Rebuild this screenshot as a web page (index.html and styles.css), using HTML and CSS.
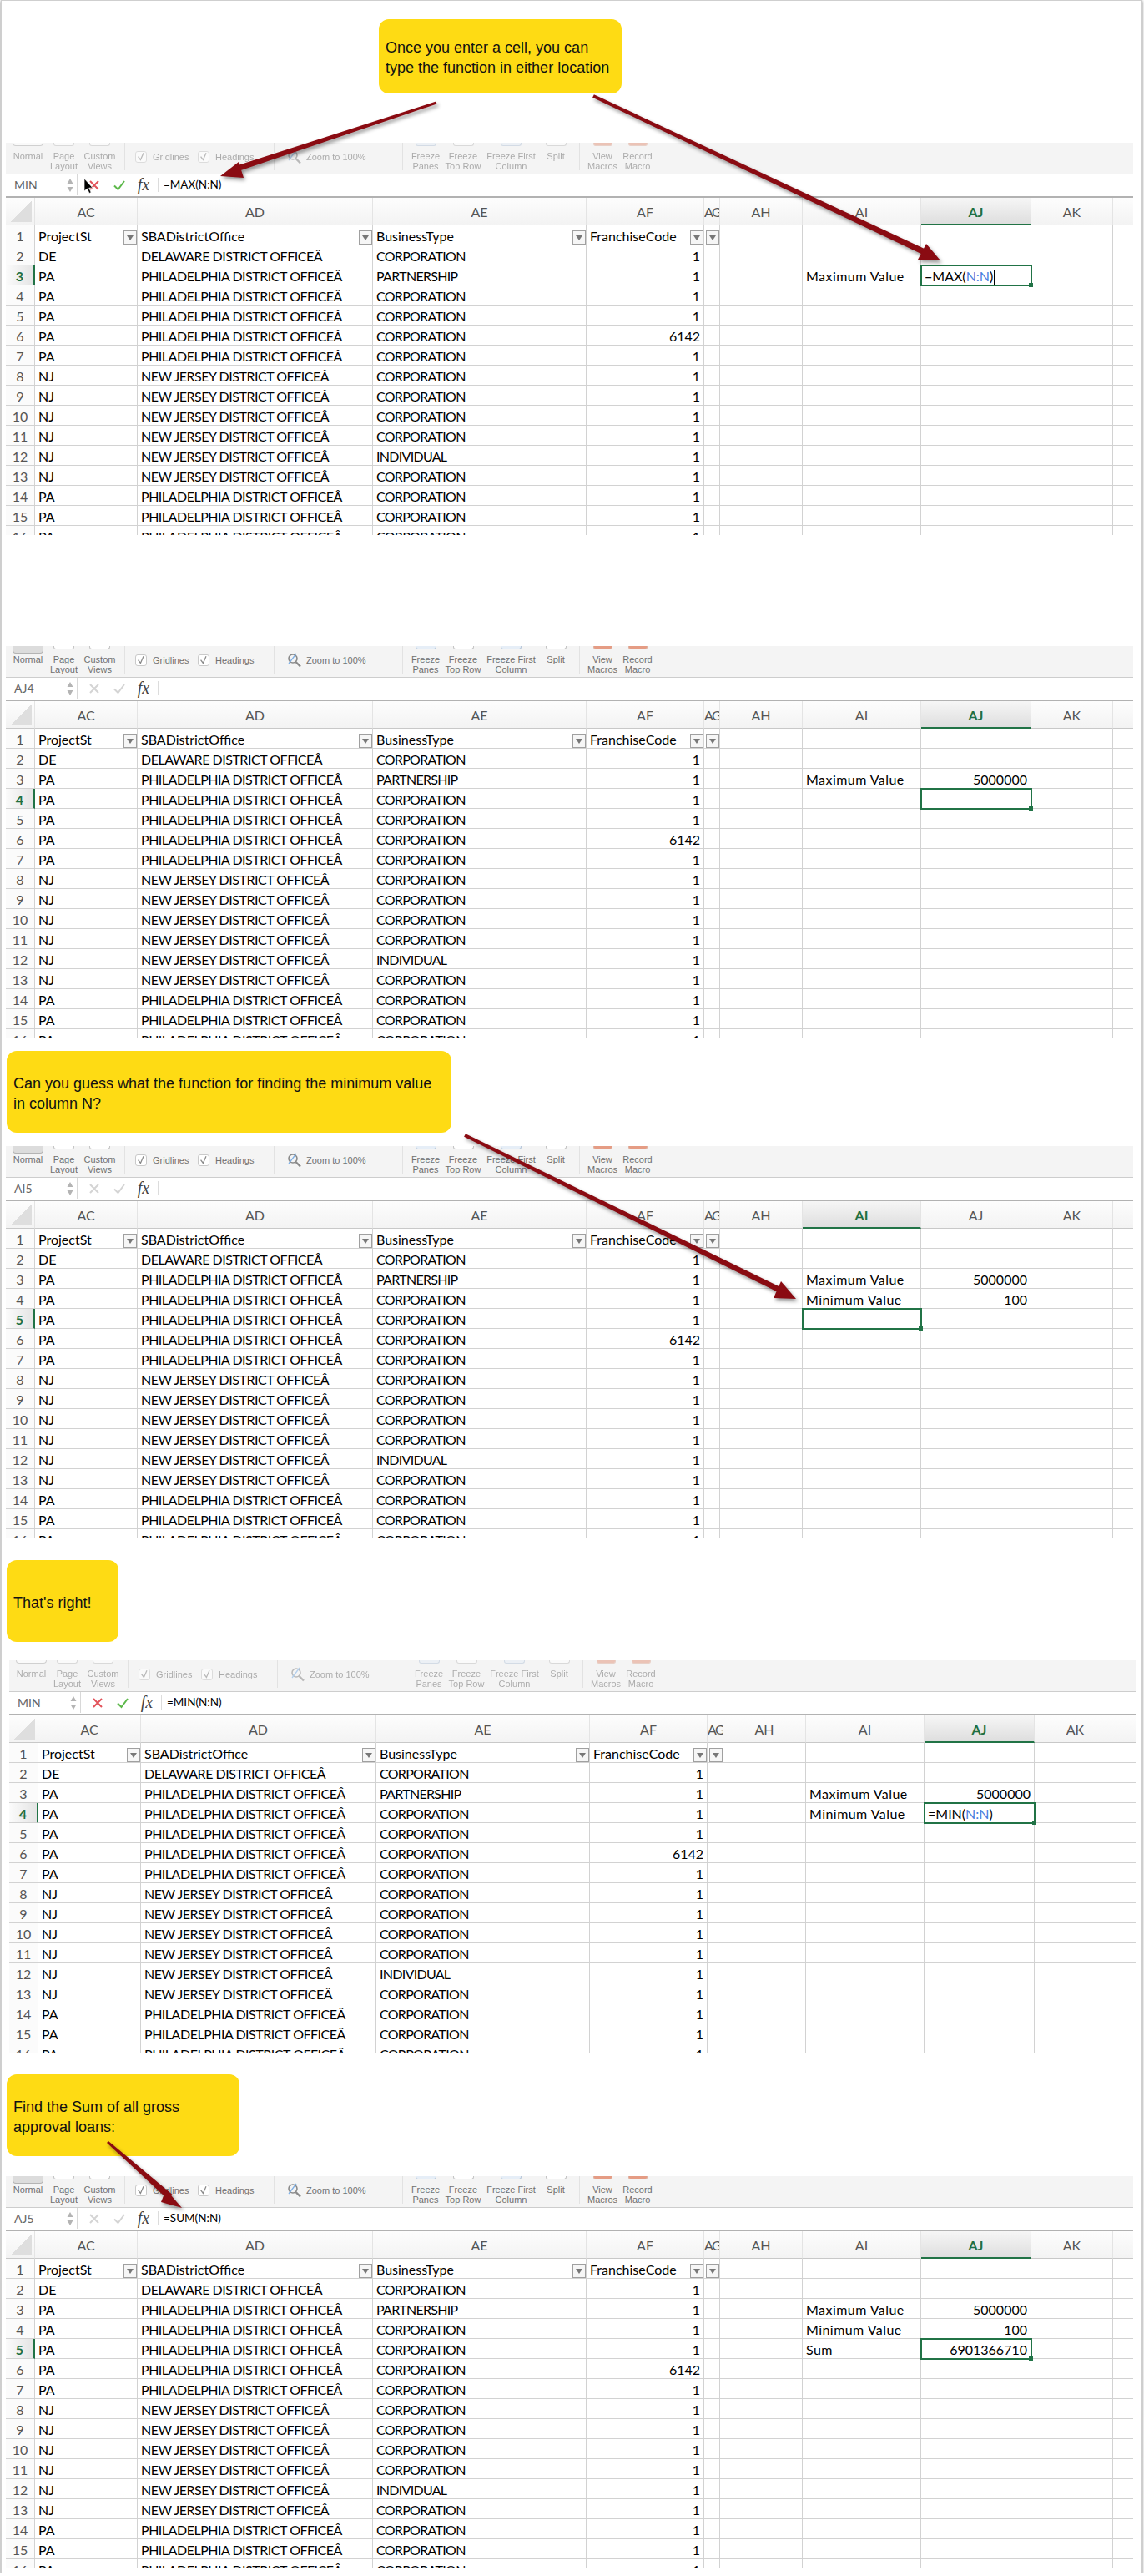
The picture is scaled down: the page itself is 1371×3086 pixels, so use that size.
FILE: index.html
```html
<!DOCTYPE html>
<html lang="en">
<head>
    <meta charset="UTF-8">
    <title>Excel Functions: MAX, MIN and SUM</title>
    <link rel="stylesheet" href="styles.css">
</head>
<body>
<svg class="defs" width="0" height="0">
    <symbol id="i-x" viewBox="0 0 14 14"><path d="M2 2L12 12M12 2L2 12" fill="none" stroke="currentColor" stroke-width="2"/></symbol>
    <symbol id="i-ok" viewBox="0 0 14 14"><path d="M1 7.5L5.5 12L13 2" fill="none" stroke="currentColor" stroke-width="2"/></symbol>
    <symbol id="i-spin" viewBox="0 0 8 18"><path d="M4 1L7.5 7H.5ZM4 17L7.5 11H.5Z" fill="#b4b4b4"/></symbol>
    <symbol id="i-tick" viewBox="0 0 14 14"><path d="M3 6.5L6.3 11L10.5 1.5" fill="none" stroke="#8a8a8a" stroke-width="1.5"/></symbol>
    <symbol id="i-zoom" viewBox="0 0 18 18"><circle cx="7" cy="7" r="5" fill="none" stroke="#8a8a8a" stroke-width="1.6"/><path d="M10.5 11L16 16.5" stroke="#8a8a8a" stroke-width="2.4"/><path d="M2 13L11 1" stroke="#7fb0e6" stroke-width="1.3"/></symbol>
</svg>

<div class="page">

<div class="callout callout-first">Once you enter a cell, you can<br>type the function in either location</div>

<!-- step 1: typing =MAX -->
<section class="panel panel-edit panel-first">
    <div class="ribbon">
        <div class="group g-views">
            <div class="item"><i class="stub stub-wide"></i><span>Normal</span></div>
            <div class="item"><i class="stub"></i><span>Page<br>Layout</span></div>
            <div class="item"><i class="stub"></i><span>Custom<br>Views</span></div>
        </div>
        <div class="group g-show">
            <div class="check"><span class="box"><svg><use href="#i-tick"/></svg></span>Gridlines</div>
            <div class="check"><span class="box"><svg><use href="#i-tick"/></svg></span>Headings</div>
        </div>
        <div class="group g-zoom"><div class="check"><svg class="zoom-icon"><use href="#i-zoom"/></svg>Zoom to 100%</div></div>
        <div class="group g-freeze">
            <div class="item i-44"><i class="stub stub-blue"></i><span>Freeze<br>Panes</span></div>
            <div class="item i-46"><i class="stub"></i><span>Freeze<br>Top Row</span></div>
            <div class="item i-69"><i class="stub stub-blue"></i><span>Freeze First<br>Column</span></div>
            <div class="item i-38"><i class="stub"></i><span>Split</span></div>
        </div>
        <div class="group g-macro">
            <div class="item i-42"><i class="stub stub-red"></i><span>View<br>Macros</span></div>
            <div class="item i-42"><i class="stub stub-red"></i><span>Record<br>Macro</span></div>
        </div>
    </div>
    <div class="fbar">
        <div class="namebox">MIN<svg class="spin"><use href="#i-spin"/></svg></div>
        <svg class="fb-x"><use href="#i-x"/></svg>
        <svg class="fb-ok"><use href="#i-ok"/></svg>
        <span class="fx">fx</span>
        <span class="formula">=MAX(N:N)</span>
    </div>
    <table class="grid">
        <tr><th class="corner"></th><th>AC</th><th>AD</th><th>AE</th><th>AF</th><th>AG</th><th>AH</th><th>AI</th><th class="on">AJ</th><th>AK</th><th></th></tr>
        <tr class="head"><th>1<td><b class="fb"></b>ProjectSt<td><b class="fb"></b>SBADistrictOffice<td><b class="fb"></b>BusinessType<td><b class="fb"></b>FranchiseCode<td><b class="fb"></b><td><td><td><td><td></tr>
        <tr><th>2<td>DE<td>DELAWARE DISTRICT OFFICEÂ<td>CORPORATION<td>1<td><td><td><td><td><td></tr>
        <tr><th class="on">3<td>PA<td>PHILADELPHIA DISTRICT OFFICEÂ<td>PARTNERSHIP<td>1<td><td><td>Maximum Value<td class="sel edit caret">=MAX(<em>N:N</em>)<u></u><td><td></tr>
        <tr><th>4<td>PA<td>PHILADELPHIA DISTRICT OFFICEÂ<td>CORPORATION<td>1<td><td><td><td><td><td></tr>
        <tr><th>5<td>PA<td>PHILADELPHIA DISTRICT OFFICEÂ<td>CORPORATION<td>1<td><td><td><td><td><td></tr>
        <tr><th>6<td>PA<td>PHILADELPHIA DISTRICT OFFICEÂ<td>CORPORATION<td>6142<td><td><td><td><td><td></tr>
        <tr><th>7<td>PA<td>PHILADELPHIA DISTRICT OFFICEÂ<td>CORPORATION<td>1<td><td><td><td><td><td></tr>
        <tr><th>8<td>NJ<td>NEW JERSEY DISTRICT OFFICEÂ<td>CORPORATION<td>1<td><td><td><td><td><td></tr>
        <tr><th>9<td>NJ<td>NEW JERSEY DISTRICT OFFICEÂ<td>CORPORATION<td>1<td><td><td><td><td><td></tr>
        <tr><th>10<td>NJ<td>NEW JERSEY DISTRICT OFFICEÂ<td>CORPORATION<td>1<td><td><td><td><td><td></tr>
        <tr><th>11<td>NJ<td>NEW JERSEY DISTRICT OFFICEÂ<td>CORPORATION<td>1<td><td><td><td><td><td></tr>
        <tr><th>12<td>NJ<td>NEW JERSEY DISTRICT OFFICEÂ<td>INDIVIDUAL<td>1<td><td><td><td><td><td></tr>
        <tr><th>13<td>NJ<td>NEW JERSEY DISTRICT OFFICEÂ<td>CORPORATION<td>1<td><td><td><td><td><td></tr>
        <tr><th>14<td>PA<td>PHILADELPHIA DISTRICT OFFICEÂ<td>CORPORATION<td>1<td><td><td><td><td><td></tr>
        <tr><th>15<td>PA<td>PHILADELPHIA DISTRICT OFFICEÂ<td>CORPORATION<td>1<td><td><td><td><td><td></tr>
        <tr><th>16<td>PA<td>PHILADELPHIA DISTRICT OFFICEÂ<td>CORPORATION<td>1<td><td><td><td><td><td></tr>
    </table>
</section>

<!-- step 2: max result -->
<section class="panel panel-second">
    <div class="ribbon">
        <div class="group g-views">
            <div class="item"><i class="stub stub-wide"></i><span>Normal</span></div>
            <div class="item"><i class="stub"></i><span>Page<br>Layout</span></div>
            <div class="item"><i class="stub"></i><span>Custom<br>Views</span></div>
        </div>
        <div class="group g-show">
            <div class="check"><span class="box"><svg><use href="#i-tick"/></svg></span>Gridlines</div>
            <div class="check"><span class="box"><svg><use href="#i-tick"/></svg></span>Headings</div>
        </div>
        <div class="group g-zoom"><div class="check"><svg class="zoom-icon"><use href="#i-zoom"/></svg>Zoom to 100%</div></div>
        <div class="group g-freeze">
            <div class="item i-44"><i class="stub stub-blue"></i><span>Freeze<br>Panes</span></div>
            <div class="item i-46"><i class="stub"></i><span>Freeze<br>Top Row</span></div>
            <div class="item i-69"><i class="stub stub-blue"></i><span>Freeze First<br>Column</span></div>
            <div class="item i-38"><i class="stub"></i><span>Split</span></div>
        </div>
        <div class="group g-macro">
            <div class="item i-42"><i class="stub stub-red"></i><span>View<br>Macros</span></div>
            <div class="item i-42"><i class="stub stub-red"></i><span>Record<br>Macro</span></div>
        </div>
    </div>
    <div class="fbar">
        <div class="namebox">AJ4<svg class="spin"><use href="#i-spin"/></svg></div>
        <svg class="fb-x"><use href="#i-x"/></svg>
        <svg class="fb-ok"><use href="#i-ok"/></svg>
        <span class="fx">fx</span>
        <span class="formula"></span>
    </div>
    <table class="grid">
        <tr><th class="corner"></th><th>AC</th><th>AD</th><th>AE</th><th>AF</th><th>AG</th><th>AH</th><th>AI</th><th class="on">AJ</th><th>AK</th><th></th></tr>
        <tr class="head"><th>1<td><b class="fb"></b>ProjectSt<td><b class="fb"></b>SBADistrictOffice<td><b class="fb"></b>BusinessType<td><b class="fb"></b>FranchiseCode<td><b class="fb"></b><td><td><td><td><td></tr>
        <tr><th>2<td>DE<td>DELAWARE DISTRICT OFFICEÂ<td>CORPORATION<td>1<td><td><td><td><td><td></tr>
        <tr><th>3<td>PA<td>PHILADELPHIA DISTRICT OFFICEÂ<td>PARTNERSHIP<td>1<td><td><td>Maximum Value<td>5000000<td><td></tr>
        <tr><th class="on">4<td>PA<td>PHILADELPHIA DISTRICT OFFICEÂ<td>CORPORATION<td>1<td><td><td><td class="sel"><u></u><td><td></tr>
        <tr><th>5<td>PA<td>PHILADELPHIA DISTRICT OFFICEÂ<td>CORPORATION<td>1<td><td><td><td><td><td></tr>
        <tr><th>6<td>PA<td>PHILADELPHIA DISTRICT OFFICEÂ<td>CORPORATION<td>6142<td><td><td><td><td><td></tr>
        <tr><th>7<td>PA<td>PHILADELPHIA DISTRICT OFFICEÂ<td>CORPORATION<td>1<td><td><td><td><td><td></tr>
        <tr><th>8<td>NJ<td>NEW JERSEY DISTRICT OFFICEÂ<td>CORPORATION<td>1<td><td><td><td><td><td></tr>
        <tr><th>9<td>NJ<td>NEW JERSEY DISTRICT OFFICEÂ<td>CORPORATION<td>1<td><td><td><td><td><td></tr>
        <tr><th>10<td>NJ<td>NEW JERSEY DISTRICT OFFICEÂ<td>CORPORATION<td>1<td><td><td><td><td><td></tr>
        <tr><th>11<td>NJ<td>NEW JERSEY DISTRICT OFFICEÂ<td>CORPORATION<td>1<td><td><td><td><td><td></tr>
        <tr><th>12<td>NJ<td>NEW JERSEY DISTRICT OFFICEÂ<td>INDIVIDUAL<td>1<td><td><td><td><td><td></tr>
        <tr><th>13<td>NJ<td>NEW JERSEY DISTRICT OFFICEÂ<td>CORPORATION<td>1<td><td><td><td><td><td></tr>
        <tr><th>14<td>PA<td>PHILADELPHIA DISTRICT OFFICEÂ<td>CORPORATION<td>1<td><td><td><td><td><td></tr>
        <tr><th>15<td>PA<td>PHILADELPHIA DISTRICT OFFICEÂ<td>CORPORATION<td>1<td><td><td><td><td><td></tr>
        <tr><th>16<td>PA<td>PHILADELPHIA DISTRICT OFFICEÂ<td>CORPORATION<td>1<td><td><td><td><td><td></tr>
    </table>
</section>

<div class="callout callout-guess">Can you guess what the function for finding the minimum value<br>in column N?</div>

<!-- step 3: min label -->
<section class="panel panel-third">
    <div class="ribbon">
        <div class="group g-views">
            <div class="item"><i class="stub stub-wide"></i><span>Normal</span></div>
            <div class="item"><i class="stub"></i><span>Page<br>Layout</span></div>
            <div class="item"><i class="stub"></i><span>Custom<br>Views</span></div>
        </div>
        <div class="group g-show">
            <div class="check"><span class="box"><svg><use href="#i-tick"/></svg></span>Gridlines</div>
            <div class="check"><span class="box"><svg><use href="#i-tick"/></svg></span>Headings</div>
        </div>
        <div class="group g-zoom"><div class="check"><svg class="zoom-icon"><use href="#i-zoom"/></svg>Zoom to 100%</div></div>
        <div class="group g-freeze">
            <div class="item i-44"><i class="stub stub-blue"></i><span>Freeze<br>Panes</span></div>
            <div class="item i-46"><i class="stub"></i><span>Freeze<br>Top Row</span></div>
            <div class="item i-69"><i class="stub stub-blue"></i><span>Freeze First<br>Column</span></div>
            <div class="item i-38"><i class="stub"></i><span>Split</span></div>
        </div>
        <div class="group g-macro">
            <div class="item i-42"><i class="stub stub-red"></i><span>View<br>Macros</span></div>
            <div class="item i-42"><i class="stub stub-red"></i><span>Record<br>Macro</span></div>
        </div>
    </div>
    <div class="fbar">
        <div class="namebox">AI5<svg class="spin"><use href="#i-spin"/></svg></div>
        <svg class="fb-x"><use href="#i-x"/></svg>
        <svg class="fb-ok"><use href="#i-ok"/></svg>
        <span class="fx">fx</span>
        <span class="formula"></span>
    </div>
    <table class="grid">
        <tr><th class="corner"></th><th>AC</th><th>AD</th><th>AE</th><th>AF</th><th>AG</th><th>AH</th><th class="on">AI</th><th>AJ</th><th>AK</th><th></th></tr>
        <tr class="head"><th>1<td><b class="fb"></b>ProjectSt<td><b class="fb"></b>SBADistrictOffice<td><b class="fb"></b>BusinessType<td><b class="fb"></b>FranchiseCode<td><b class="fb"></b><td><td><td><td><td></tr>
        <tr><th>2<td>DE<td>DELAWARE DISTRICT OFFICEÂ<td>CORPORATION<td>1<td><td><td><td><td><td></tr>
        <tr><th>3<td>PA<td>PHILADELPHIA DISTRICT OFFICEÂ<td>PARTNERSHIP<td>1<td><td><td>Maximum Value<td>5000000<td><td></tr>
        <tr><th>4<td>PA<td>PHILADELPHIA DISTRICT OFFICEÂ<td>CORPORATION<td>1<td><td><td>Minimum Value<td>100<td><td></tr>
        <tr><th class="on">5<td>PA<td>PHILADELPHIA DISTRICT OFFICEÂ<td>CORPORATION<td>1<td><td><td class="sel"><u></u><td><td><td></tr>
        <tr><th>6<td>PA<td>PHILADELPHIA DISTRICT OFFICEÂ<td>CORPORATION<td>6142<td><td><td><td><td><td></tr>
        <tr><th>7<td>PA<td>PHILADELPHIA DISTRICT OFFICEÂ<td>CORPORATION<td>1<td><td><td><td><td><td></tr>
        <tr><th>8<td>NJ<td>NEW JERSEY DISTRICT OFFICEÂ<td>CORPORATION<td>1<td><td><td><td><td><td></tr>
        <tr><th>9<td>NJ<td>NEW JERSEY DISTRICT OFFICEÂ<td>CORPORATION<td>1<td><td><td><td><td><td></tr>
        <tr><th>10<td>NJ<td>NEW JERSEY DISTRICT OFFICEÂ<td>CORPORATION<td>1<td><td><td><td><td><td></tr>
        <tr><th>11<td>NJ<td>NEW JERSEY DISTRICT OFFICEÂ<td>CORPORATION<td>1<td><td><td><td><td><td></tr>
        <tr><th>12<td>NJ<td>NEW JERSEY DISTRICT OFFICEÂ<td>INDIVIDUAL<td>1<td><td><td><td><td><td></tr>
        <tr><th>13<td>NJ<td>NEW JERSEY DISTRICT OFFICEÂ<td>CORPORATION<td>1<td><td><td><td><td><td></tr>
        <tr><th>14<td>PA<td>PHILADELPHIA DISTRICT OFFICEÂ<td>CORPORATION<td>1<td><td><td><td><td><td></tr>
        <tr><th>15<td>PA<td>PHILADELPHIA DISTRICT OFFICEÂ<td>CORPORATION<td>1<td><td><td><td><td><td></tr>
        <tr><th>16<td>PA<td>PHILADELPHIA DISTRICT OFFICEÂ<td>CORPORATION<td>1<td><td><td><td><td><td></tr>
    </table>
</section>

<div class="callout callout-right">That's right!</div>

<!-- step 4: typing =MIN -->
<section class="panel panel-edit panel-fourth">
    <div class="ribbon">
        <div class="group g-views">
            <div class="item"><i class="stub stub-wide"></i><span>Normal</span></div>
            <div class="item"><i class="stub"></i><span>Page<br>Layout</span></div>
            <div class="item"><i class="stub"></i><span>Custom<br>Views</span></div>
        </div>
        <div class="group g-show">
            <div class="check"><span class="box"><svg><use href="#i-tick"/></svg></span>Gridlines</div>
            <div class="check"><span class="box"><svg><use href="#i-tick"/></svg></span>Headings</div>
        </div>
        <div class="group g-zoom"><div class="check"><svg class="zoom-icon"><use href="#i-zoom"/></svg>Zoom to 100%</div></div>
        <div class="group g-freeze">
            <div class="item i-44"><i class="stub stub-blue"></i><span>Freeze<br>Panes</span></div>
            <div class="item i-46"><i class="stub"></i><span>Freeze<br>Top Row</span></div>
            <div class="item i-69"><i class="stub stub-blue"></i><span>Freeze First<br>Column</span></div>
            <div class="item i-38"><i class="stub"></i><span>Split</span></div>
        </div>
        <div class="group g-macro">
            <div class="item i-42"><i class="stub stub-red"></i><span>View<br>Macros</span></div>
            <div class="item i-42"><i class="stub stub-red"></i><span>Record<br>Macro</span></div>
        </div>
    </div>
    <div class="fbar">
        <div class="namebox">MIN<svg class="spin"><use href="#i-spin"/></svg></div>
        <svg class="fb-x"><use href="#i-x"/></svg>
        <svg class="fb-ok"><use href="#i-ok"/></svg>
        <span class="fx">fx</span>
        <span class="formula">=MIN(N:N)</span>
    </div>
    <table class="grid">
        <tr><th class="corner"></th><th>AC</th><th>AD</th><th>AE</th><th>AF</th><th>AG</th><th>AH</th><th>AI</th><th class="on">AJ</th><th>AK</th><th></th></tr>
        <tr class="head"><th>1<td><b class="fb"></b>ProjectSt<td><b class="fb"></b>SBADistrictOffice<td><b class="fb"></b>BusinessType<td><b class="fb"></b>FranchiseCode<td><b class="fb"></b><td><td><td><td><td></tr>
        <tr><th>2<td>DE<td>DELAWARE DISTRICT OFFICEÂ<td>CORPORATION<td>1<td><td><td><td><td><td></tr>
        <tr><th>3<td>PA<td>PHILADELPHIA DISTRICT OFFICEÂ<td>PARTNERSHIP<td>1<td><td><td>Maximum Value<td>5000000<td><td></tr>
        <tr><th class="on">4<td>PA<td>PHILADELPHIA DISTRICT OFFICEÂ<td>CORPORATION<td>1<td><td><td>Minimum Value<td class="sel edit">=MIN(<em>N:N</em>)<u></u><td><td></tr>
        <tr><th>5<td>PA<td>PHILADELPHIA DISTRICT OFFICEÂ<td>CORPORATION<td>1<td><td><td><td><td><td></tr>
        <tr><th>6<td>PA<td>PHILADELPHIA DISTRICT OFFICEÂ<td>CORPORATION<td>6142<td><td><td><td><td><td></tr>
        <tr><th>7<td>PA<td>PHILADELPHIA DISTRICT OFFICEÂ<td>CORPORATION<td>1<td><td><td><td><td><td></tr>
        <tr><th>8<td>NJ<td>NEW JERSEY DISTRICT OFFICEÂ<td>CORPORATION<td>1<td><td><td><td><td><td></tr>
        <tr><th>9<td>NJ<td>NEW JERSEY DISTRICT OFFICEÂ<td>CORPORATION<td>1<td><td><td><td><td><td></tr>
        <tr><th>10<td>NJ<td>NEW JERSEY DISTRICT OFFICEÂ<td>CORPORATION<td>1<td><td><td><td><td><td></tr>
        <tr><th>11<td>NJ<td>NEW JERSEY DISTRICT OFFICEÂ<td>CORPORATION<td>1<td><td><td><td><td><td></tr>
        <tr><th>12<td>NJ<td>NEW JERSEY DISTRICT OFFICEÂ<td>INDIVIDUAL<td>1<td><td><td><td><td><td></tr>
        <tr><th>13<td>NJ<td>NEW JERSEY DISTRICT OFFICEÂ<td>CORPORATION<td>1<td><td><td><td><td><td></tr>
        <tr><th>14<td>PA<td>PHILADELPHIA DISTRICT OFFICEÂ<td>CORPORATION<td>1<td><td><td><td><td><td></tr>
        <tr><th>15<td>PA<td>PHILADELPHIA DISTRICT OFFICEÂ<td>CORPORATION<td>1<td><td><td><td><td><td></tr>
        <tr><th>16<td>PA<td>PHILADELPHIA DISTRICT OFFICEÂ<td>CORPORATION<td>1<td><td><td><td><td><td></tr>
    </table>
</section>

<div class="callout callout-sum">Find the Sum of all gross<br>approval loans:</div>

<!-- step 5: sum result -->
<section class="panel panel-fifth">
    <div class="ribbon">
        <div class="group g-views">
            <div class="item"><i class="stub stub-wide"></i><span>Normal</span></div>
            <div class="item"><i class="stub"></i><span>Page<br>Layout</span></div>
            <div class="item"><i class="stub"></i><span>Custom<br>Views</span></div>
        </div>
        <div class="group g-show">
            <div class="check"><span class="box"><svg><use href="#i-tick"/></svg></span>Gridlines</div>
            <div class="check"><span class="box"><svg><use href="#i-tick"/></svg></span>Headings</div>
        </div>
        <div class="group g-zoom"><div class="check"><svg class="zoom-icon"><use href="#i-zoom"/></svg>Zoom to 100%</div></div>
        <div class="group g-freeze">
            <div class="item i-44"><i class="stub stub-blue"></i><span>Freeze<br>Panes</span></div>
            <div class="item i-46"><i class="stub"></i><span>Freeze<br>Top Row</span></div>
            <div class="item i-69"><i class="stub stub-blue"></i><span>Freeze First<br>Column</span></div>
            <div class="item i-38"><i class="stub"></i><span>Split</span></div>
        </div>
        <div class="group g-macro">
            <div class="item i-42"><i class="stub stub-red"></i><span>View<br>Macros</span></div>
            <div class="item i-42"><i class="stub stub-red"></i><span>Record<br>Macro</span></div>
        </div>
    </div>
    <div class="fbar">
        <div class="namebox">AJ5<svg class="spin"><use href="#i-spin"/></svg></div>
        <svg class="fb-x"><use href="#i-x"/></svg>
        <svg class="fb-ok"><use href="#i-ok"/></svg>
        <span class="fx">fx</span>
        <span class="formula">=SUM(N:N)</span>
    </div>
    <table class="grid">
        <tr><th class="corner"></th><th>AC</th><th>AD</th><th>AE</th><th>AF</th><th>AG</th><th>AH</th><th>AI</th><th class="on">AJ</th><th>AK</th><th></th></tr>
        <tr class="head"><th>1<td><b class="fb"></b>ProjectSt<td><b class="fb"></b>SBADistrictOffice<td><b class="fb"></b>BusinessType<td><b class="fb"></b>FranchiseCode<td><b class="fb"></b><td><td><td><td><td></tr>
        <tr><th>2<td>DE<td>DELAWARE DISTRICT OFFICEÂ<td>CORPORATION<td>1<td><td><td><td><td><td></tr>
        <tr><th>3<td>PA<td>PHILADELPHIA DISTRICT OFFICEÂ<td>PARTNERSHIP<td>1<td><td><td>Maximum Value<td>5000000<td><td></tr>
        <tr><th>4<td>PA<td>PHILADELPHIA DISTRICT OFFICEÂ<td>CORPORATION<td>1<td><td><td>Minimum Value<td>100<td><td></tr>
        <tr><th class="on">5<td>PA<td>PHILADELPHIA DISTRICT OFFICEÂ<td>CORPORATION<td>1<td><td><td>Sum<td class="sel">6901366710<u></u><td><td></tr>
        <tr><th>6<td>PA<td>PHILADELPHIA DISTRICT OFFICEÂ<td>CORPORATION<td>6142<td><td><td><td><td><td></tr>
        <tr><th>7<td>PA<td>PHILADELPHIA DISTRICT OFFICEÂ<td>CORPORATION<td>1<td><td><td><td><td><td></tr>
        <tr><th>8<td>NJ<td>NEW JERSEY DISTRICT OFFICEÂ<td>CORPORATION<td>1<td><td><td><td><td><td></tr>
        <tr><th>9<td>NJ<td>NEW JERSEY DISTRICT OFFICEÂ<td>CORPORATION<td>1<td><td><td><td><td><td></tr>
        <tr><th>10<td>NJ<td>NEW JERSEY DISTRICT OFFICEÂ<td>CORPORATION<td>1<td><td><td><td><td><td></tr>
        <tr><th>11<td>NJ<td>NEW JERSEY DISTRICT OFFICEÂ<td>CORPORATION<td>1<td><td><td><td><td><td></tr>
        <tr><th>12<td>NJ<td>NEW JERSEY DISTRICT OFFICEÂ<td>INDIVIDUAL<td>1<td><td><td><td><td><td></tr>
        <tr><th>13<td>NJ<td>NEW JERSEY DISTRICT OFFICEÂ<td>CORPORATION<td>1<td><td><td><td><td><td></tr>
        <tr><th>14<td>PA<td>PHILADELPHIA DISTRICT OFFICEÂ<td>CORPORATION<td>1<td><td><td><td><td><td></tr>
        <tr><th>15<td>PA<td>PHILADELPHIA DISTRICT OFFICEÂ<td>CORPORATION<td>1<td><td><td><td><td><td></tr>
        <tr><th>16<td>PA<td>PHILADELPHIA DISTRICT OFFICEÂ<td>CORPORATION<td>1<td><td><td><td><td><td></tr>
    </table>
</section>

<!-- annotation arrows and the mouse pointer sit over everything -->
<svg class="overlay" width="1371" height="3086" viewBox="0 0 1371 3086">
    <path class="cursor" d="M101 214V229L104.5 226L107 231.5L109.2 230.5L106.7 225.2L111 225Z"/>
    <g class="arrow">
        <path d="M523.5 124.4L522.5 121.6L282.9 198.7L285.1 205.3Z"/>
        <path d="M264 211L286 194L292 213Z"/>
    </g>
    <g class="arrow">
        <path d="M710.1 116.8L711.9 113.2L1109.5 298.8L1106.5 305.2Z"/>
        <path d="M1127 312L1110 292L1100 311Z"/>
    </g>
    <g class="arrow">
        <path d="M556.1 1361.8L557.9 1358.2L941.5 1544.9L938.5 1551.1Z"/>
        <path d="M954 1556L936 1535L927 1555Z"/>
    </g>
    <g class="arrow">
        <path d="M128 2567.1L130 2564.9L206.6 2629L201.4 2635Z"/>
        <path d="M218 2645L199 2623L193 2638Z"/>
    </g>
</svg>

</div>
</body>
</html>
```

FILE: styles.css
```css
* {
    box-sizing: border-box;
}
body {
    margin: 0;
    background: #fff;
    font-family: Lato, sans-serif;
    color: #000;
}
.defs {
    display: block;
    position: absolute;
}
.page {
    position: relative;
    width: 1368px;
    height: 3083px;
    margin-left: 1px;
    padding: 1px 0 0 1px;
    overflow: hidden;
    border: 1px solid #cfcfcf;
    border-bottom-color: #9a9a9a;
    box-shadow: 0 1px 3px rgba(0, 0, 0, 0.5);
}

/* yellow notes */
.callout {
    display: flex;
    align-items: center;
    padding: 3px 0 0 8px;
    border-radius: 12px;
    background-color: #fedb14;
    font-family: "Liberation Sans", Arial, sans-serif;
    font-size: 18px;
    line-height: 24px;
    color: #111;
}
.callout-first {
    width: 291px;
    height: 89px;
    margin: 21px 0 0 451px;
}
.callout-guess {
    width: 533px;
    height: 98px;
    margin: 15px 0 0 5px;
}
.callout-right {
    width: 134px;
    height: 98px;
    margin: 26px 0 0 5px;
}
.callout-sum {
    width: 279px;
    height: 98px;
    margin: 26px 0 0 5px;
}

/* one excel screenshot */
.panel {
    width: 1351px;
    height: 470px;
    margin-left: 4px;
    overflow: hidden;
}
.panel-first { margin-top: 59px; }
.panel-second { margin-top: 133px; }
.panel-third { margin-top: 16px; }
.panel-fourth { margin-top: 22px; margin-left: 8px; }
.panel-fifth { margin-top: 24px; }

.ribbon {
    display: flex;
    height: 38px;
    background-color: #f4f4f4;
    border-bottom: 1px solid #cdcdcd;
    font-family: "Liberation Sans", Arial, sans-serif;
    font-size: 11px;
    line-height: 12px;
    color: #707070;
}
.group {
    display: flex;
    flex: none;
    height: 33px;
    border-right: 1px solid #e2e2e2;
}
.g-views { width: 143px; padding-left: 5px; }
.g-show { width: 179px; padding-left: 12px; align-items: center; }
.g-zoom { width: 154px; padding-left: 15px; align-items: center; }
.g-freeze { width: 212px; padding-left: 5px; }
.g-macro { padding-left: 6px; border-right: 0; }

.item {
    display: grid;
    grid-template-rows: 10px auto;
    justify-items: center;
    width: 43px;
    text-align: center;
    white-space: nowrap;
}
.i-44 { width: 44px; }
.i-46 { width: 46px; }
.i-69 { width: 69px; }
.i-38 { width: 38px; }
.i-42 { width: 42px; }
.stub {
    display: block;
    width: 25px;
    height: 4px;
    background-color: #fff;
    border: 1px solid #c4c4c4;
    border-top: 0;
    border-radius: 0 0 3px 3px;
}
.stub-wide {
    width: 37px;
    height: 9px;
    background-color: #dcdcdc;
    border-color: #b4b4b4;
    border-radius: 0 0 4px 4px;
}
.stub-blue { border-color: #b9c7d9; background-color: #e6eef7; }
.stub-red { width: 23px; border-color: #dfb3a3; background-color: #e59c84; }

.check {
    display: flex;
    align-items: center;
    width: 75px;
    white-space: nowrap;
}
.g-zoom .check { width: auto; }
.box {
    display: block;
    flex: none;
    width: 14px;
    height: 14px;
    margin-right: 7px;
    background-color: #fff;
    border: 1px solid #cacaca;
    border-radius: 3px;
}
.box svg {
    display: block;
    width: 12px;
    height: 12px;
}
.zoom-icon {
    flex: none;
    width: 18px;
    height: 18px;
    margin-right: 5px;
}
.panel-edit .item,
.panel-edit .check {
    opacity: 0.55;
}
.panel-edit .stub-wide {
    height: 4px;
    background-color: #fff;
}

/* name box and formula bar */
.fbar {
    display: flex;
    align-items: center;
    height: 28px;
    padding-bottom: 1px;
    background-color: #fff;
    border-bottom: 2px solid #b2b2b2;
    font-size: 14px;
    color: #000;
}
.namebox {
    display: flex;
    align-items: center;
    justify-content: space-between;
    flex: none;
    width: 86px;
    height: 25px;
    padding: 0 4px 0 10px;
    border-right: 1px solid #d8d8d8;
    color: #666;
}
.spin {
    flex: none;
    width: 8px;
    height: 18px;
}
.fb-x, .fb-ok {
    flex: none;
    width: 14px;
    height: 14px;
    color: #d4d4d4;
}
.fb-x { margin-left: 13px; }
.fb-ok { margin-left: 16px; }
.panel-edit .fb-x { color: #e2525a; }
.panel-edit .fb-ok { color: #5cb84a; }
.fx {
    flex: none;
    width: 20px;
    height: 22px;
    margin-left: 13px;
    padding-right: 2px;
    font-family: "Liberation Serif", serif;
    font-style: italic;
    font-size: 20px;
    line-height: 21px;
    text-align: center;
    color: #444;
}
.formula {
    height: 17px;
    margin-left: 6px;
    padding-left: 6px;
    border-left: 1px solid #dcdcdc;
    font-size: 13.5px;
    line-height: 17px;
}

/* sheet */
.grid {
    width: 1351px;
    table-layout: fixed;
    border-collapse: separate;
    border-spacing: 0;
    font-size: 16px;
    font-variant-numeric: tabular-nums;
}
.grid th, .grid td {
    height: 24px;
    padding: 2px 4px 0;
    overflow: hidden;
    white-space: nowrap;
    font-weight: 400;
    line-height: 21px;
    border-right: 1px solid #d2d2d2;
    border-bottom: 1px solid #d2d2d2;
}
.grid td:nth-child(3) { letter-spacing: -0.48px; }
.grid td:nth-child(4) { letter-spacing: -0.7px; }
.grid td:nth-child(8) { letter-spacing: 0.45px; }
.grid .head td { letter-spacing: 0; }
.grid tr:first-child th {
    height: 33px;
    padding: 1px 0 0;
    background: linear-gradient(#fdfdfd, #f3f3f3);
    border-right-color: #e4e4e4;
    border-bottom-color: #c8c8c8;
    color: #555;
}
.grid tr:first-child th:nth-child(1) { width: 35px; }
.grid tr:first-child th:nth-child(2) { width: 123px; }
.grid tr:first-child th:nth-child(3) { width: 282px; }
.grid tr:first-child th:nth-child(4) { width: 256px; }
.grid tr:first-child th:nth-child(5) { width: 141px; }
.grid tr:first-child th:nth-child(6) { width: 19px; text-align: left; letter-spacing: -1.5px; }
.grid tr:first-child th:nth-child(7) { width: 99px; }
.grid tr:first-child th:nth-child(8) { width: 142px; }
.grid tr:first-child th:nth-child(9) { width: 132px; }
.grid tr:first-child th:nth-child(10) { width: 98px; }
.grid tr:first-child th:nth-child(11) { width: 24px; border-right: 0; }
.grid tr:first-child .corner {
    background:
        linear-gradient(135deg, transparent 50%, #dedede 50%) 5px 3px / 26px 26px no-repeat,
        linear-gradient(#fdfdfd, #f3f3f3);
}
.grid tr:first-child th.on {
    background: linear-gradient(#f6f6f6, #dedede);
    border-bottom: 2px solid #217346;
    font-weight: 700;
    color: #1d6f42;
}
.grid tr:not(:first-child) th {
    padding: 2px 0 0;
    background-color: #fbfbfb;
    text-align: center;
    color: #555;
}
.grid tr:not(:first-child) th.on {
    background: linear-gradient(to right, #fbfbfb, #e4e4e4);
    border-right: 2px solid #217346;
    font-weight: 700;
    color: #1d6f42;
}
.grid td:nth-child(5),
.grid td:nth-child(9) {
    text-align: right;
}
.grid td:nth-child(11) {
    border-right: 0;
}
.grid .head td {
    padding-right: 0;
}
.grid .head td:nth-child(5) {
    text-align: left;
}
.grid .head td:nth-child(6) {
    padding-left: 0;
}
.fb {
    float: right;
    position: relative;
    width: 16px;
    height: 17px;
    margin-top: 4px;
    background-color: #f6f6f6;
    border: 1px solid #a0a0a0;
}
.fb::after {
    content: "";
    position: absolute;
    left: 3px;
    top: 5px;
    border: 4px solid transparent;
    border-top: 6px solid #777;
    border-bottom: 0;
}
.grid td.sel {
    position: relative;
    overflow: visible;
    outline: 2px solid #217346;
    outline-offset: -1px;
}
.grid td.edit {
    text-align: left;
}
.edit em {
    font-style: normal;
    color: #4a7fe0;
}
.caret::after {
    content: "";
    display: inline-block;
    width: 1px;
    height: 18px;
    margin-left: 1px;
    background-color: #000;
    vertical-align: -4px;
}
.sel u {
    position: absolute;
    z-index: 1;
    right: -3px;
    bottom: -3px;
    width: 5px;
    height: 5px;
    background-color: #217346;
}

/* arrows */
.overlay {
    position: absolute;
    left: -2px;
    top: -1px;
    pointer-events: none;
}
.arrow {
    fill: #8a0b12;
    filter: drop-shadow(2px 3px 2px rgba(0, 0, 0, 0.4));
}
.cursor {
    fill: #000;
    stroke: #fff;
    stroke-width: 0.7;
}
```
